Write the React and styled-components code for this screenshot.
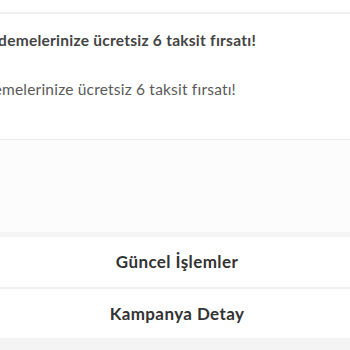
import React from 'react';
import styled, { createGlobalStyle } from 'styled-components';

const GlobalStyle = createGlobalStyle`
  html, body {
    margin: 0;
    padding: 0;
    background: #fdfdfd;
    font-family: "Lato", "Open Sans", sans-serif;
    overflow: hidden;
  }
`;

const Page = styled.div`
  width: 350px;
  height: 350px;
  overflow: hidden;
  display: flex;
  flex-direction: column;
`;

const TopBar = styled.div`
  height: 12px;
  background: #fff;
  border-bottom: 2px solid #f0f0f0;
`;

const Campaign = styled.section`
  background: #fff;
  height: 126px;
  border-bottom: 1px solid #ededed;
  display: flex;
  flex-direction: column;
`;

const Line = styled.div`
  display: flex;
  justify-content: flex-end;
  width: ${p => p.$end}px;
  white-space: nowrap;
  margin-top: ${p => p.$top}px;
  font-size: 15.5px;
  font-weight: ${p => (p.$bold ? 700 : 400)};
  color: ${p => (p.$bold ? '#444' : '#5a5a5a')};
  letter-spacing: ${p => (p.$bold ? '0.25px' : '0.2px')};
`;

const Spacer = styled.div`
  height: 93px;
  background: #fcfcfc;
`;

const Band = styled.div`
  height: ${p => p.$h}px;
  background: #f4f4f4;
`;

const MenuRow = styled.button`
  all: unset;
  display: flex;
  align-items: center;
  justify-content: center;
  height: 50px;
  background: #fff;
  border-bottom: ${p => (p.$last ? 'none' : '2px solid #f0f0f0')};
  font-size: 17px;
  font-weight: 700;
  color: #333;
  letter-spacing: 0.4px;
  padding-left: 4px;
`;

export default function App() {
  return (
    <Page>
      <GlobalStyle />
      <TopBar />
      <Campaign>
        <Line $bold $end={256} $top={17}>Tüm ödemelerinize ücretsiz 6 taksit fırsatı!</Line>
        <Line $end={236} $top={31}>Tüm ödemelerinize ücretsiz 6 taksit fırsatı!</Line>
      </Campaign>
      <Spacer />
      <Band $h={5} />
      <MenuRow>Güncel İşlemler</MenuRow>
      <MenuRow $last>Kampanya Detay</MenuRow>
      <Band $h={12} />
    </Page>
  );
}
